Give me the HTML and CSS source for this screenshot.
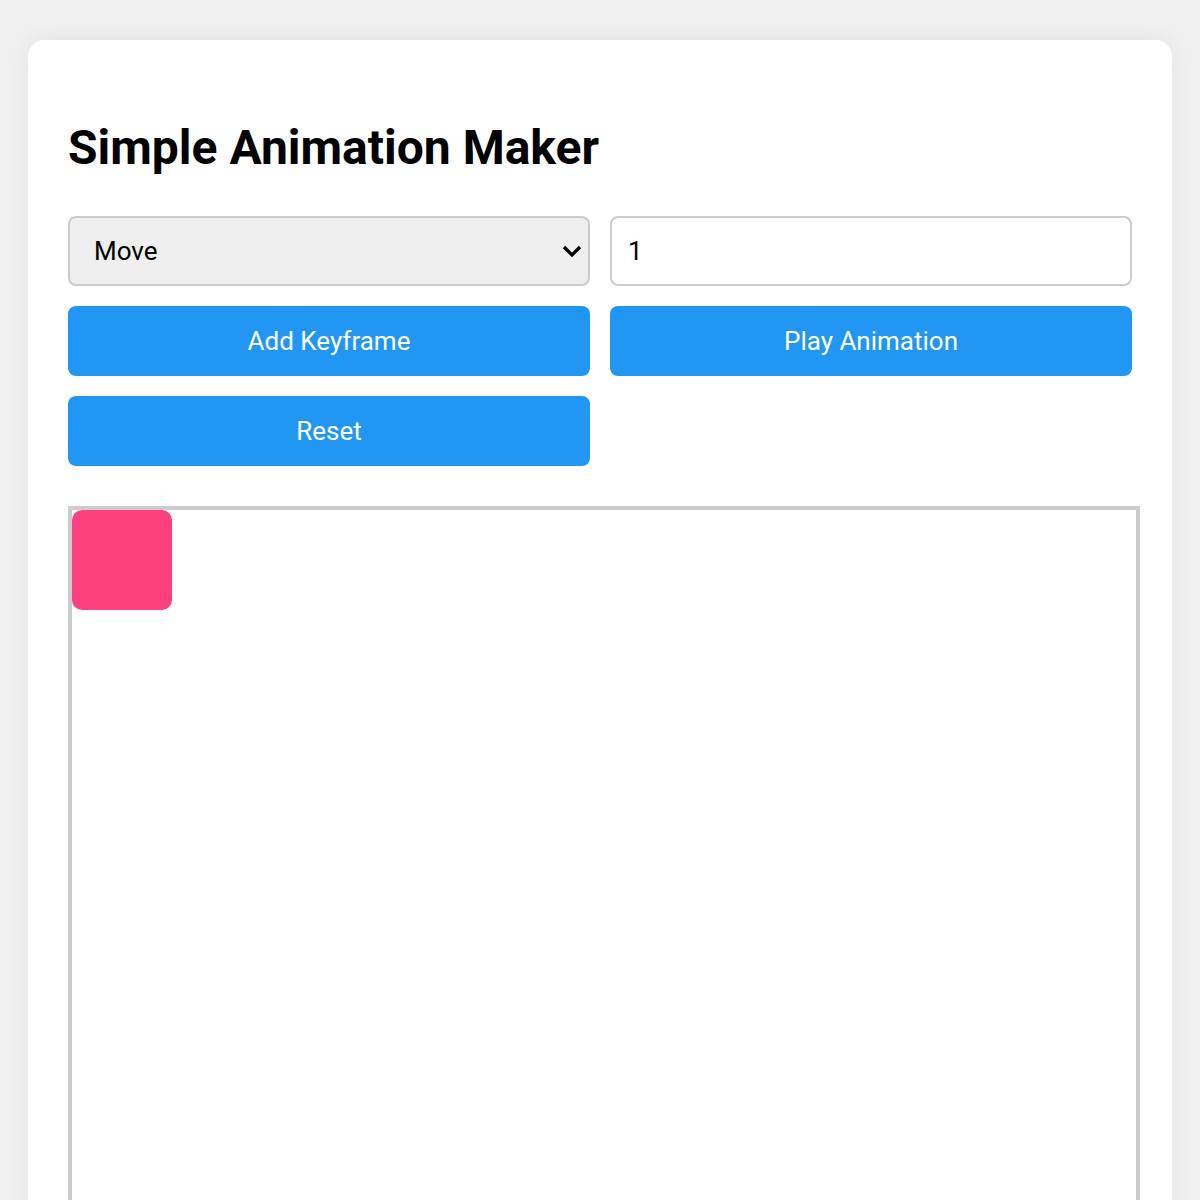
FILE: index.html
```html
<!DOCTYPE html>
<html>

<head>
    <meta name="viewport" content="width=device-width, initial-scale=1">
    <link rel="stylesheet" href="styles.css">
</head>

<body>
    <div class="card">
        <h1>Simple Animation Maker</h1>
        <div class="controls">
            <div class="select-wrap">
                <select id="type">
                    <option>Move</option>
                    <option>Rotate</option>
                    <option>Scale</option>
                </select>
                <svg class="chevron" viewBox="0 0 20 14" width="20" height="14">
                    <path d="M2 3 L10 11 L18 3" fill="none" stroke="#000" stroke-width="3.2" />
                </svg>
            </div>
            <input type="number" id="value" value="1">
            <button class="btn">Add Keyframe</button>
            <button class="btn">Play Animation</button>
            <button class="btn">Reset</button>
        </div>
        <div id="stage">
            <div class="box"></div>
        </div>
    </div>
</body>

</html>
```

FILE: styles.css
```css
body {
    margin: 0;
    background: #f0f0f0;
    font-family: Roboto, "Liberation Sans", sans-serif;
}

.card {
    margin: 40px 28px 0;
    padding: 40px 40px 60px;
    background: #fff;
    border-radius: 16px;
    box-shadow: 0 0 20px rgba(0, 0, 0, 0.06);
}

h1 {
    margin: 40px 0 40px;
    font-size: 48px;
    font-weight: 700;
    line-height: 56px;
    color: #000;
}

.controls {
    display: grid;
    grid-template-columns: 1fr 1fr;
    gap: 20px;
}

.select-wrap {
    position: relative;
}

select {
    appearance: none;
    -webkit-appearance: none;
    width: 100%;
    height: 70px;
    box-sizing: border-box;
    padding: 0 24px;
    border: 2px solid #ccc;
    border-radius: 8px;
    background: #efefef;
    font-family: inherit;
    font-size: 26px;
    color: #000;
}

.chevron {
    position: absolute;
    right: 8px;
    top: 28px;
}

input {
    width: 100%;
    height: 70px;
    box-sizing: border-box;
    padding: 0 16px;
    border: 2px solid #ccc;
    border-radius: 8px;
    background: #fff;
    font-family: inherit;
    font-size: 26px;
    color: #000;
}

input::-webkit-inner-spin-button {
    -webkit-appearance: none;
}

.btn {
    height: 70px;
    border: none;
    border-radius: 8px;
    background: #2196f3;
    color: #fff;
    font-family: inherit;
    font-size: 26px;
}

#stage {
    margin-top: 40px;
    width: 100%;
    height: 800px;
    border: 4px solid #ccc;
    position: relative;
}

.box {
    width: 100px;
    height: 100px;
    background: #ff407e;
    border-radius: 10px;
    position: absolute;
    left: 0;
    top: 0;
}
```
